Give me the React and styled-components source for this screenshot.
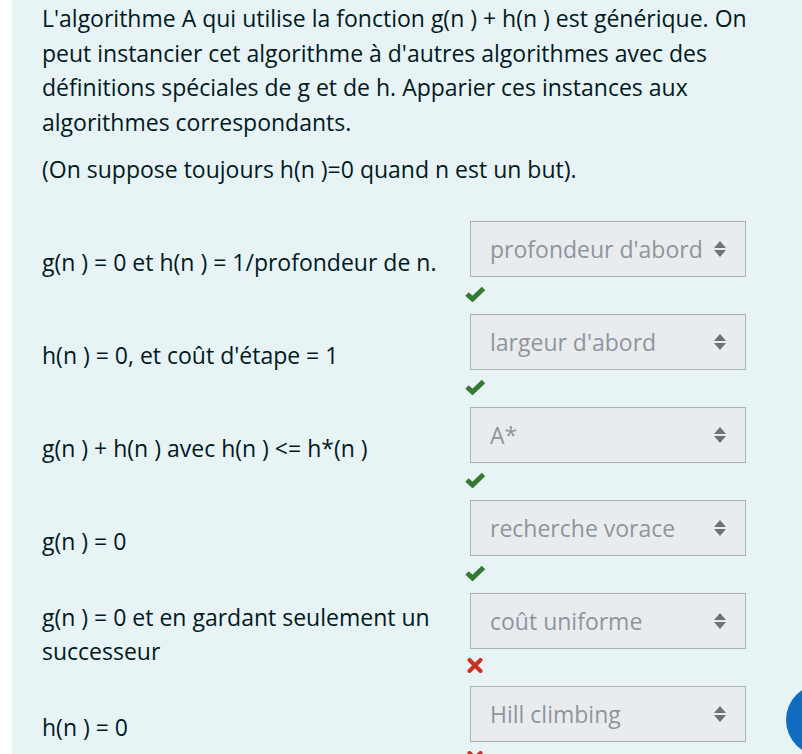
import React from "react";
import styled, { createGlobalStyle } from "styled-components";

const GlobalStyle = createGlobalStyle`
  html, body {
    margin: 0;
    padding: 0;
    background: #fff;
    overflow: hidden;
  }
  body {
    font-family: "Open Sans", "Liberation Sans", sans-serif;
  }
`;

const rows = [
  { label: "g(n ) = 0 et h(n ) = 1/profondeur de n.", value: "profondeur d'abord", ok: true },
  { label: "h(n ) = 0, et coût d'étape = 1", value: "largeur d'abord", ok: true },
  { label: "g(n ) + h(n ) avec h(n ) <= h*(n )", value: "A*", ok: true },
  { label: "g(n ) = 0", value: "recherche vorace", ok: true },
  { label: "g(n ) = 0 et en gardant seulement un successeur", value: "coût uniforme", ok: false },
  { label: "h(n ) = 0", value: "Hill climbing", ok: false },
];

const CheckIcon = () => (
  <svg viewBox="0 0 22 16" width="22" height="16">
    <path
      d="M3 8 L8.5 13 L19.5 2.5"
      fill="none"
      stroke="currentColor"
      strokeWidth="5"
      strokeLinejoin="miter"
    />
  </svg>
);

const CrossIcon = () => (
  <svg viewBox="0 0 16 15" width="16" height="15">
    <path
      d="M2.5 2 L13.5 13 M13.5 2 L2.5 13"
      fill="none"
      stroke="currentColor"
      strokeWidth="4"
      strokeLinecap="round"
    />
  </svg>
);

const App = () => {
  return (
    <>
      <GlobalStyle />
      <Page>
        <Formulation>
          <Para>
            L'algorithme A qui utilise la fonction g(n ) + h(n ) est générique. On peut
            instancier cet algorithme à d'autres algorithmes avec des définitions spéciales
            de g et de h. Apparier ces instances aux algorithmes correspondants.
          </Para>
          <Para>(On suppose toujours h(n )=0 quand n est un but).</Para>
          <AnswerList>
            {rows.map((r, idx) => (
              <Row key={idx}>
                <Label>{r.label}</Label>
                <Control>
                  <Select>
                    <span>{r.value}</span>
                    <SortArrow viewBox="0 0 12 16">
                      <polygon points="0,7 6,0 12,7" />
                      <polygon points="0,9 12,9 6,16" />
                    </SortArrow>
                  </Select>
                  <Feedback ok={r.ok}>{r.ok ? <CheckIcon /> : <CrossIcon />}</Feedback>
                </Control>
              </Row>
            ))}
          </AnswerList>
        </Formulation>
      </Page>
      <HelpBubble />
    </>
  );
};
export default App;

const Page = styled.div`
  padding-left: 12px;
`;

const Formulation = styled.div`
  background: #e7f3f5;
  color: #001a1e;
  padding: 1px 30px 0 30px;
  font-size: 23px;
  line-height: 34.5px;
  min-height: 800px;
`;

const Para = styled.p`
  margin: 0 0 13px 0;
`;

const AnswerList = styled.div`
  padding-top: 21px;
  display: flex;
  flex-direction: column;
`;

const Row = styled.div`
  display: grid;
  grid-template-columns: 428px 276px;
  align-items: center;
`;

const Label = styled.div`
  padding-right: 8px;
  padding-bottom: 10px;
`;

const Control = styled.div`
  display: flex;
  flex-direction: column;
`;

const Select = styled.div`
  box-sizing: border-box;
  height: 56px;
  background: #e9ecef;
  border: 1px solid #a9b0b6;
  color: #8f959b;
  display: flex;
  align-items: center;
  justify-content: space-between;
  padding: 2px 19px 0 19px;
  white-space: nowrap;
`;

const SortArrow = styled.svg`
  width: 12px;
  height: 16px;
  fill: #6a737b;
  flex-shrink: 0;
  margin-top: -2px;
`;

const Feedback = styled.div`
  height: 37px;
  display: flex;
  align-items: flex-start;
  padding-top: 9px;
  box-sizing: border-box;
  margin-left: ${(p) => (p.ok ? "-6px" : "-3px")};
  color: ${(p) => (p.ok ? "#357a32" : "#ca3120")};
`;

const HelpBubble = styled.div`
  position: fixed;
  right: -56px;
  bottom: -2px;
  width: 72px;
  height: 72px;
  border-radius: 50%;
  background: #0f6cbf;
`;
